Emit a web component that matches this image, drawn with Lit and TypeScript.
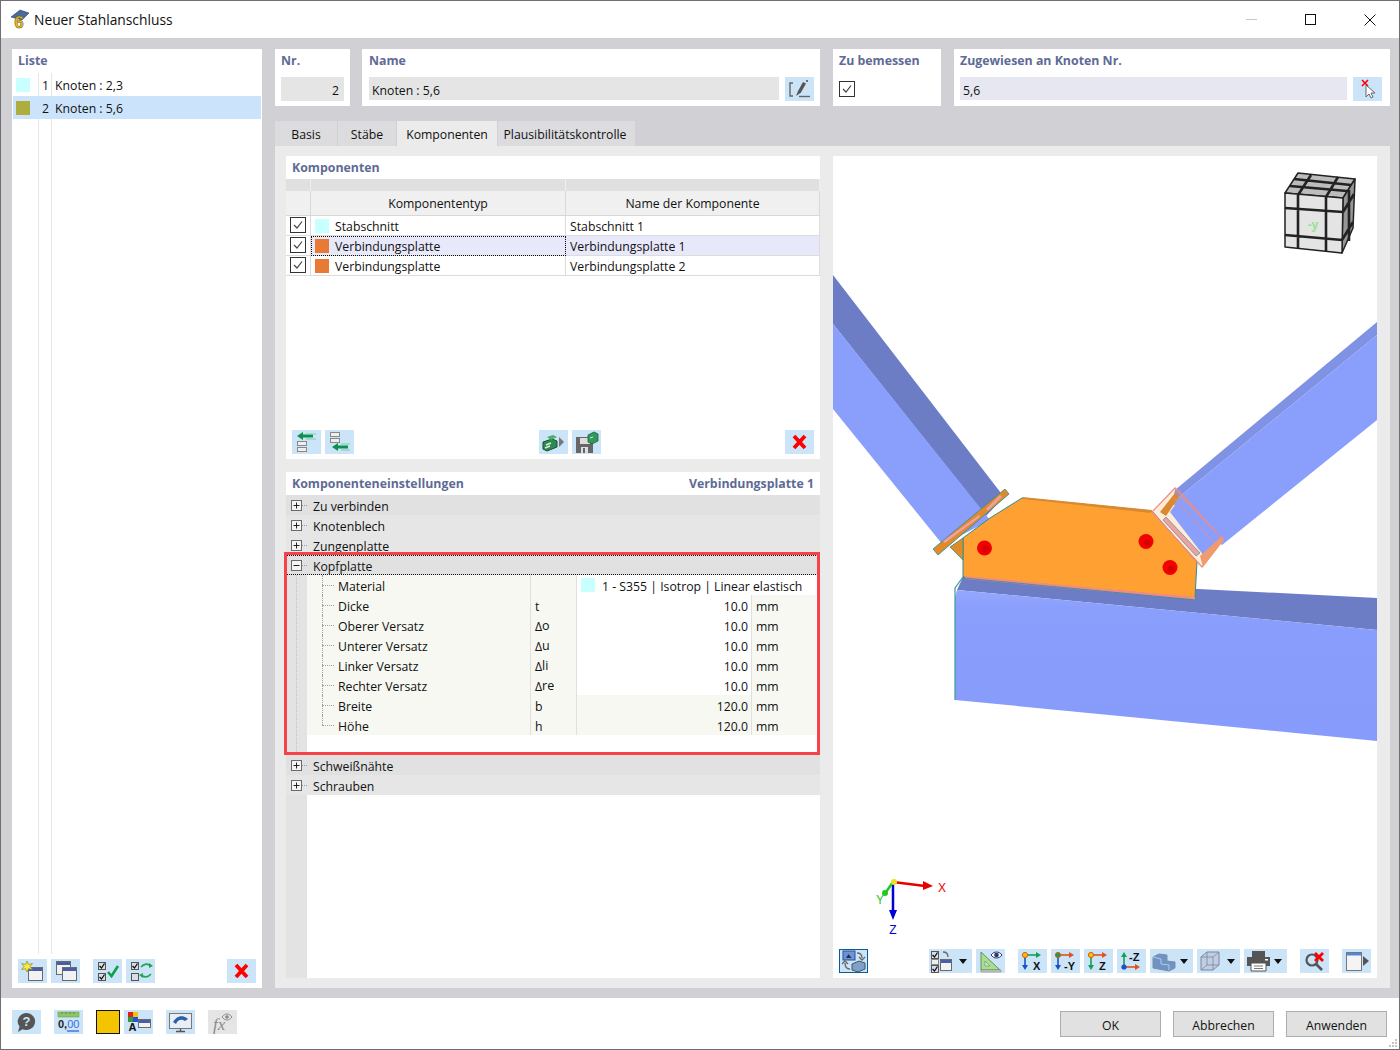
import { LitElement, css, html, svg } from 'lit'
import { customElement } from 'lit/decorators.js'

const icon = (body: any, w = 29): any => html`<svg width=${w} height="24" viewBox="0 0 ${w} 24">${body}</svg>`

// small building blocks for the toolbar icons
const win = (x: number, y: number, w: number, h: number): any => svg`
  <rect x=${x + 0.5} y=${y + 0.5} width=${w} height=${h} fill="#f2f2f2" stroke="#6a6a6a"/>
  <rect x=${x + 1} y=${y + 1} width=${w - 1} height="3" fill="#4a5da8"/>`

const box = (x: number, y: number, on = true): any => svg`
  <rect x=${x + 0.5} y=${y + 0.5} width="7" height="7" fill="#d8dde6" stroke="#555"/>
  ${on ? svg`<path d="M${x + 1.5} ${y + 4}l2 2 3-4.5" fill="none" stroke="#111" stroke-width="1.3"/>` : ''}`

const caret = (x: number): any => svg`<path d="M${x} 10h8l-4 5z" fill="#111"/>`

const redX = svg`<path d="M9 6l11 12M20 6L9 18" stroke="#f00" stroke-width="3.8" fill="none"/>`

const axis = (dot: string, right: string, down: string, label: string): any => svg`
  <path d="M7 6V18" stroke=${down} stroke-width="1.6"/><path d="M4 16h6l-3 5z" fill=${down}/>
  <path d="M7 6H19" stroke=${right} stroke-width="1.6"/><path d="M18 3v6l5-3z" fill=${right}/>
  <circle cx="7" cy="6" r="2.6" fill=${dot} stroke="#e05a10" stroke-width="1"/>
  <text x=${label.length > 1 ? 13 : 15} y="21" font-size="11" font-weight="700" font-family="Liberation Sans, sans-serif" fill="#111">${label}</text>`

const rows = (y: number): any => svg`
  <rect x="5.5" y=${y + 0.5} width="9" height="4" fill="#eee" stroke="#888"/>
  <rect x="5.5" y=${y + 6.5} width="9" height="4" fill="#eee" stroke="#888"/>`

const icons: Record<string, any> = {
  x: redX,
  edit: svg`<path d="M8 6H5V19H8" fill="none" stroke="#666" stroke-width="1.4"/><path d="M11 19l2-5 5-9 3 1.500-5 9z" fill="#555"/><path d="M14 19.500H25" stroke="#666" stroke-width="1.4"/><path d="M22 3v2" stroke="#555" stroke-width="1.6"/>`,
  pick: svg`<path d="M9 3l6 6M15 3L9 9" stroke="#f00" stroke-width="1.6"/><path d="M13 8v12l3-3 2 4 2-1-2-4h4z" fill="#fff" stroke="#666"/>`,
  addTop: svg`<path d="M5 6l6-4v2.500h10V7.500H11V10z" fill="#0d8f4f"/><path d="M14 4h10M14 9h10" stroke="#7ccfa8" stroke-width="1.200" fill="none"/>${rows(11)}`,
  addBot: svg`${rows(2)}<path d="M7 17l6-4v2.500h10v3H13V21z" fill="#0d8f4f"/><path d="M16 14h9M16 20h9" stroke="#7ccfa8" stroke-width="1.200" fill="none"/>`,
  drawer: svg`<path d="M4 12l9-3 5 2v6l-10 4-4-2z" fill="#2f8a50" stroke="#1f4d35"/><path d="M8 7l6-2 4 2-6 3z" fill="#49b06e"/><path d="M7 15l5-2M6 18l5-2" stroke="#d6efe0" stroke-width="1.400"/><path d="M20 7l5 5-5 5z" fill="#777"/>`,
  save: svg`<path d="M4 7H21V23H4z" fill="#666"/><rect x="8" y="8" width="10" height="6" fill="#ddd"/><rect x="9" y="17" width="7" height="6" fill="#ddd"/><rect x="11" y="18" width="2" height="5" fill="#666"/><path d="M16 5l6-3 4 2v7l-6 3-4-2z" fill="#2f9a5d" stroke="#1f5d3d" stroke-width=".8"/><path d="M18 8l3-1" stroke="#d6efe0"/>`,
  newWin: svg`${win(10, 8, 14, 13)}<path d="M9 2l1.500 3.500 4-1-2.500 3 2.500 3-4-.8L9 13l-1.400-3.300-4 .8 2.400-3-2.400-3 4 1z" fill="#ffe93a" stroke="#8a8a30" stroke-width=".7"/>`,
  copyWin: svg`${win(5, 2, 14, 13)}${win(11, 8, 14, 13)}`,
  checkAll: svg`${box(5, 3)}${box(5, 14)}<path d="M15 13l3.500 4L25 7" fill="none" stroke="#0fa04a" stroke-width="2.600"/>`,
  checkSwap: svg`${box(5, 3)}${box(5, 14, false)}<path d="M15 8c3-3.500 7-3.500 10-1M25 15c-3 3.500-7 3.500-10 1" fill="none" stroke="#22a552" stroke-width="1.800"/><path d="M23 4l4 3-4 2zM17 14l-4 2 4 3z" fill="#22a552"/>`,
  help: svg`<path d="M14 3a9 8.500 0 1 1-3.500 16.300L6 22l1.500-5.500A9 8.500 0 0 1 14 3z" fill="#555"/><text x="14.500" y="16" text-anchor="middle" font-size="13" font-weight="700" font-family="Liberation Sans, sans-serif" fill="#cbe4f8">?</text>`,
  digits: svg`<rect x="4" y="2" width="21" height="5" fill="#8fc46b" stroke="#6da04d" stroke-width=".6"/><path d="M8 2v2M12 2v2M16 2v2M20 2v2" stroke="#4f7d36" stroke-width=".8"/><text x="4" y="18" font-size="11" font-family="Liberation Sans, sans-serif" fill="#3a6fd8"><tspan font-weight="700" fill="#222">0,</tspan><tspan>00</tspan></text><path d="M13 21H25" stroke="#3a6fd8" stroke-width="1.400"/>`,
  palette: svg`<rect x="4" y="2" width="5" height="5" fill="#e02020"/><rect x="9" y="2" width="5" height="5" fill="#f5c400"/><rect x="4" y="7" width="5" height="5" fill="#2f9a3d"/><rect x="9" y="7" width="5" height="5" fill="#2a50d8"/><text x="4.500" y="21" font-size="11" font-weight="700" font-family="Liberation Sans, sans-serif" fill="#111">A</text>${win(14, 9, 12, 8)}`,
  monitor: svg`<rect x="3.500" y="3.500" width="22" height="15" fill="#e8eef5" stroke="#777"/><path d="M7 12c3-6 10-8 15-3l-3 2c-3-2-7-2-9 3z" fill="#2d5fa8"/><path d="M14.500 18.500V21M10 21.500h9" stroke="#555" stroke-width="1.400"/>`,
  fx: svg`<text x="5" y="20" font-size="17" font-style="italic" font-family="Liberation Serif, serif" fill="#8a8a8a">fx</text><path d="M14 7c3-4 7-4 10 0-3 4-7 4-10 0z" fill="none" stroke="#8a8a8a"/><circle cx="19" cy="7" r="1.800" fill="#8a8a8a"/>`,
  sync: svg`<rect x="4" y="2" width="12" height="9" fill="#6f93d8" stroke="#2a4f9a"/><path d="M7 9l2.500-4 3 4z" fill="#234"/><path d="M18 4c4 0 5 2 5 5M20 8l3 3 3-3" fill="none" stroke="#666" stroke-width="1.300"/><path d="M11 20c-4 0-5-2-5-6M3 15l3-3 3 3" fill="none" stroke="#666" stroke-width="1.300"/><path d="M13 15l7-3 6 2v6l-7 3-6-2z" fill="#7fa0c8" stroke="#456"/>`,
  views: svg`${box(2, 2)}<rect x="2.500" y="10.500" width="7" height="5" fill="#eee" stroke="#888"/>${box(2, 16)}${win(11, 10, 11, 11)}<path d="M14 3c4 0 5 2 5 5" fill="none" stroke="#666" stroke-width="1.300"/>${caret(30)}`,
  ruler: svg`<path d="M5 3V21H24z" fill="#a8e08a" stroke="#6a8a6a"/><path d="M9 12v5h5z" fill="#cbe4f8" stroke="#6a8a6a" stroke-width=".6"/><path d="M5 21h20v2H5z" fill="#c8d0c8" stroke="#777" stroke-width=".5"/><path d="M15 6c3-4 8-4 11 0-3 4-8 4-11 0z" fill="#fff" stroke="#2a3a6a"/><circle cx="20.500" cy="6" r="2.300" fill="#2a3a6a"/>`,
  axX: axis('#f5c400', '#15a050', '#1a50c8', 'X'),
  axY: axis('#15a050', '#e0521a', '#1a50c8', '-Y'),
  axZ: axis('#f5c400', '#e0521a', '#15a050', 'Z'),
  axMinusZ: svg`<path d="M7 18V6" stroke="#15a050" stroke-width="1.600"/><path d="M4 8h6L7 3z" fill="#15a050"/><path d="M7 18H19" stroke="#e0521a" stroke-width="1.600"/><path d="M18 15v6l5-3z" fill="#e0521a"/><circle cx="7" cy="18" r="2.600" fill="#1a50c8"/><text x="12" y="12" font-size="11" font-weight="700" font-family="Liberation Sans, sans-serif" fill="#111">-Z</text>`,
  solid: svg`<path d="M3 8l6-3 8 1v6l8 1v6l-6 3-16-3z" fill="#6e93c4" stroke="#7c8fa8"/><path d="M3 8l8 2v5l8 1v5" fill="none" stroke="#b8cbe4"/>${caret(30)}`,
  wire: svg`<path d="M4 8l6-5h12v13l-6 5H4z" fill="#b8c0d4" fill-opacity=".6" stroke="#7d86a0"/><path d="M4 8h12v13M16 8l6-5M10 3v13H22M10 16l-6 5" fill="none" stroke="#7d86a0" stroke-width=".8"/>${caret(30)}`,
  printer: svg`<path d="M8 2h13v6H8z" fill="#555"/><path d="M3 8h23v9H3z" fill="#555"/><path d="M7 14h15v8H7z" fill="#fff" stroke="#555"/><path d="M10 17h9M10 19.500h9" stroke="#777"/><rect x="21" y="10" width="3" height="1.500" fill="#fff"/>${caret(30)}`,
  zoomX: svg`<circle cx="12" cy="11" r="5.500" fill="none" stroke="#555" stroke-width="2.200"/><path d="M16 15l6 6" stroke="#555" stroke-width="2.600"/><path d="M15 4l8 8M23 4l-8 8" stroke="#f00" stroke-width="2.800"/>`,
  panel: svg`<rect x="4.500" y="3.500" width="15" height="18" fill="#f4f4f4" stroke="#777"/><rect x="5" y="4" width="14" height="2.500" fill="#4f86e0"/><path d="M21 7l6 5-6 5z" fill="#555"/>`
}

@customElement('app-root')
export class AppRoot extends LitElement {
  static styles = css`
    :host {
      display: block;
      width: 1400px;
      height: 1050px;
      font-family: "Open Sans", sans-serif;
      font-size: 12.25px;
      color: #111;
    }

    svg { display: block; }

    .window {
      box-sizing: border-box;
      width: 1400px;
      height: 1050px;
      border: 1px solid #6f6f6f;
      display: flex;
      flex-direction: column;
      background: #fff;
    }

    .title {
      height: 37px;
      flex: none;
      display: flex;
      align-items: center;
      padding-left: 8px;
      font-size: 13.8px;
      gap: 4px;
    }

    .win-controls {
      margin-left: auto;
      display: flex;
    }

    .win-controls div {
      width: 59px;
      height: 37px;
      display: flex;
      align-items: center;
      justify-content: center;
    }

    .main {
      flex: 1;
      min-height: 0;
      display: flex;
      gap: 13px;
      padding: 11px 9px 10px 11px;
      background: #d0d0d5;
    }

    .list {
      width: 250px;
      flex: none;
      background: #fff;
      display: flex;
      flex-direction: column;
    }

    .head {
      font-weight: 700;
      color: #5e6b96;
      font-size: 12.35px;
      line-height: 16px;
    }

    .list .head { padding: 4px 6px 4px; }

    .list-body {
      flex: 1;
      position: relative;
      background:
        linear-gradient(#e6e6e6, #e6e6e6) 26px 0 / 1px 100% no-repeat,
        linear-gradient(#e6e6e6, #e6e6e6) 39px 0 / 1px 100% no-repeat;
      margin-bottom: 5px;
      display: flex;
      flex-direction: column;
    }

    .list-row {
      height: 23px;
      display: flex;
      align-items: center;
      margin: 0 1px;
    }

    .list-row.sel { background: #cce4fb; }

    .list-row i {
      width: 14px;
      height: 14px;
      margin-left: 3px;
    }

    .list-row b {
      font-weight: 400;
      width: 19px;
      text-align: right;
      padding-top: 2px;
    }

    .list-row span {
      margin-left: 6px;
      padding-top: 2px;
    }

    .c-cyan { background: #c8ffff; }
    .c-olive { background: #adae3f; }
    .c-orange { background: #e97a35; }

    .tools {
      display: flex;
      gap: 4px;
      flex: none;
    }

    .list .tools { padding: 0 6px 5px; }

    .ib {
      width: 29px;
      height: 24px;
      flex: none;
      background: #cbe4f8;
    }

    .ib.dd { width: 43px; }

    .ib.off { background: #e5e5e5; }

    .ib.on {
      box-sizing: border-box;
      border: 1px solid #0a5a9c;
    }

    .ib.on svg { margin: -1px; }

    .push { margin-left: auto; }

    .right {
      flex: 1;
      min-width: 0;
      display: flex;
      flex-direction: column;
    }

    .top {
      height: 57px;
      flex: none;
      display: flex;
      margin-bottom: 15px;
    }

    .card {
      box-sizing: border-box;
      background: #fff;
      padding: 4px 6px 0;
    }

    .card.nr { width: 75px; margin-right: 12px; }
    .card.name { width: 458px; margin-right: 13px; padding-left: 7px; }
    .card.check { width: 108px; margin-right: 13px; }
    .card.assign { width: 436px; padding-right: 8px; }

    .field-row {
      display: flex;
      gap: 6px;
      margin-top: 8px;
    }

    .field {
      flex: 1;
      height: 23px;
      line-height: 27px;
      background: #e5e5e5;
      padding: 0 3px;
      white-space: nowrap;
    }

    .nr .field { text-align: right; padding-right: 5px; line-height: 27px; height: 24px; }
    .assign .field { background: #e6e7f1; }

    .check-field { margin: 12px 0 0; }

    .cb {
      box-sizing: border-box;
      width: 16px;
      height: 16px;
      border: 1px solid #333;
      background: #fff;
      flex: none;
    }

    .cb svg { width: 14px; height: 14px; }

    .tabs {
      display: flex;
      height: 25px;
      flex: none;
      gap: 1px;
    }

    .tab {
      background: #dcdcdf;
      display: flex;
      align-items: center;
      justify-content: center;
      padding-top: 1px;
      box-sizing: border-box;
    }

    .tab.active { background: #ebebeb; }
    .tab.basis { width: 62px; }
    .tab.staebe { width: 58px; }
    .tab.komp { width: 100px; }
    .tab.plaus { width: 137px; padding-right: 3px; }

    .tab-panel {
      flex: 1;
      min-height: 0;
      background: #ebebeb;
      padding: 10px 13px 10px 11px;
      display: grid;
      grid-template-columns: 534px 544px;
      gap: 13px;
    }

    .left {
      display: flex;
      flex-direction: column;
      gap: 13px;
      min-height: 0;
    }

    .panel {
      background: #fff;
      display: flex;
      flex-direction: column;
    }

    .panel.comp { height: 303px; }

    .panel.settings {
      flex: 1;
      min-height: 0;
      position: relative;
    }

    .panel-head {
      display: flex;
      justify-content: space-between;
      padding: 4px 6px 3px;
    }

    .table {
      display: grid;
      grid-template-columns: 25px 255px 254px;
      grid-auto-rows: 20px;
    }

    .band {
      height: 12px;
      background: #e0e0e0;
      display: grid;
      grid-template-columns: 25px 255px 254px;
    }

    .band div { border-right: 1px solid #efefef; }

    .table.header { grid-auto-rows: 25px; }

    .table.header div {
      background: #f0f0f0;
      border-right: 1px solid #d8d8d8;
      border-bottom: 1px solid #d8d8d8;
      display: flex;
      align-items: center;
      justify-content: center;
      box-sizing: border-box;
    }

    .cell {
      box-sizing: border-box;
      border-right: 1px solid #dcdcdc;
      border-bottom: 1px solid #dcdcdc;
      display: flex;
      align-items: center;
      padding: 1px 0 0 4px;
      white-space: nowrap;
    }

    .cell.chk {
      padding: 1px 0 0 4px;
      align-items: flex-start;
    }

    .cell.hl { background: #e8e8fb; }

    .cell.focus {
      outline: 1px dotted #111;
      outline-offset: -1px;
    }

    .cell i {
      width: 14px;
      height: 14px;
      margin-right: 6px;
      margin-top: -1px;
    }

    .comp .tools {
      margin-top: auto;
      padding: 0 6px 5px;
    }

    .gap-185 { margin-left: 177px; }

    .section {
      height: 20px;
      flex: none;
      display: flex;
      align-items: center;
      padding: 2px 0 0 5px;
      background: #e6e6e6;
      box-sizing: border-box;
    }

    .section.dark { background: #e1e1e1; }

    .section.focus {
      outline: 1px dotted #111;
      outline-offset: -1px;
    }

    .section svg {
      margin-right: 5px;
      margin-top: -2px;
    }

    .sub {
      display: flex;
      height: 180px;
      flex: none;
    }

    .gutter {
      width: 21px;
      flex: none;
      background: #e3e3e3 repeating-linear-gradient(#c2c2c2 0 1px, transparent 1px 2px) 10px 0 / 1px 100% no-repeat;
    }

    .grid {
      flex: 1;
      display: grid;
      grid-template-columns: 224px 46px 175px 64px;
      grid-auto-rows: 20px;
    }

    .grid > div {
      box-sizing: border-box;
      background: #f7f8f2;
      display: flex;
      align-items: center;
      white-space: nowrap;
      padding-top: 2px;
    }

    .grid > .g-name {
      position: relative;
      padding-left: 31px;
      border-right: 1px solid #e0e0e0;
    }

    .g-name::before {
      content: '';
      position: absolute;
      left: 15px;
      top: 10px;
      width: 12px;
      border-top: 1px dotted #a0a0a0;
    }

    .g-name::after {
      content: '';
      position: absolute;
      left: 15px;
      top: 0;
      height: 20px;
      border-left: 1px dotted #a0a0a0;
    }

    .g-name.last::after { height: 10px; }

    .grid > .g-sym {
      padding-left: 4px;
      border-right: 1px solid #e0e0e0;
    }

    .g-sym sub {
      font-size: 12.5px;
      vertical-align: -4px;
      line-height: 0;
    }

    .grid > .g-val {
      justify-content: flex-end;
      padding-right: 3px;
      border-right: 1px solid #e0e0e0;
    }

    .grid > .g-val.edit { background: #fff; }

    .grid > .g-unit { padding-left: 4px; }

    .grid > .g-mat {
      grid-column: 3 / 5;
      background: #fff;
      padding-left: 4px;
    }

    .g-mat i {
      width: 14px;
      height: 14px;
      margin-right: 7px;
      margin-top: -2px;
    }

    .filler {
      flex: 1;
      border-left: 21px solid #e3e3e3;
    }

    .red-frame {
      position: absolute;
      left: -2px;
      top: 80px;
      width: 536px;
      height: 203px;
      box-sizing: border-box;
      border: 3px solid #f4444a;
      pointer-events: none;
    }

    .view {
      position: relative;
      background: #fff;
      overflow: hidden;
      display: flex;
      flex-direction: column;
    }

    .scene {
      position: absolute;
      left: 0;
      top: 0;
    }

    .view .tools {
      position: relative;
      margin-top: auto;
      padding: 0 6px 5px;
    }

    .gap-61 { margin-left: 53px; }
    .gap-13 { margin-left: 5px; }

    .footer {
      height: 51px;
      flex: none;
      display: flex;
      align-items: flex-start;
      position: relative;
      padding: 12px 12px 0 11px;
      box-sizing: border-box;
    }

    .swatch {
      box-sizing: border-box;
      width: 24px;
      height: 24px;
      background: #f5c400;
      border: 1px solid #111;
    }

    .buttons {
      margin-left: auto;
      display: flex;
      gap: 12px;
      padding-top: 1px;
    }

    .btn {
      box-sizing: border-box;
      width: 101px;
      height: 26px;
      background: #e1e1e1;
      border: 1px solid #adadad;
      display: flex;
      align-items: center;
      justify-content: center;
      padding-top: 2px;
    }

    .grip {
      position: absolute;
      right: 1px;
      bottom: 1px;
    }
  `

  btn (name: string, cls = ''): any {
    return html`<div class="ib ${cls}">${icon(icons[name], cls.includes('dd') ? 43 : 29)}</div>`
  }

  expander (open: boolean): any {
    return html`<svg width="17" height="11" viewBox="0 0 17 11">
      <rect x=".5" y=".5" width="10" height="10" fill="#f4f4f4" stroke="#6a6a6a"/>
      <path d="M2.500 5.500h6" stroke="#222"/>
      ${open ? '' : svg`<path d="M5.500 2.500v6" stroke="#222"/>`}
      <path d="M11 5.500h6" stroke="#999" stroke-dasharray="1 1"/>
    </svg>`
  }

  section (label: string, cls = ''): any {
    return html`<div class="section ${cls}">${this.expander(cls.includes('focus'))}${label}</div>`
  }

  checkbox (): any {
    return html`<div class="cb"><svg viewBox="0 0 14 14"><path d="M3 7l3 3 5-6.500" fill="none" stroke="#444" stroke-width="1.200"/></svg></div>`
  }

  scene (): any {
    return html`<svg class="scene" width="544" height="822" viewBox="833 156 544 822">
      <defs>
        <linearGradient id="lower" x1="0" y1="0" x2="0" y2="1">
          <stop offset="0" stop-color="#95a8ff"/><stop offset=".12" stop-color="#8a9efc"/><stop offset="1" stop-color="#869bfb"/>
        </linearGradient>
      </defs>
      <!-- left diagonal member -->
      <polygon points="833,275 1004,497 986,516 833,324" fill="#6c7dc6"/>
      <polygon points="833,324 990,520 943,545 833,409" fill="#8a9efc"/>
      <!-- right diagonal member -->
      <polygon points="1377,322 1175,490 1172,503 1377,335" fill="#7f92e4"/>
      <polygon points="1377,335 1172,503 1222,545 1377,420" fill="#8a9efc"/>
      <!-- chord -->
      <polygon points="963,577 1377,598 1377,630 957,590" fill="#6c7dc6"/>
      <polygon points="957,590 1377,630 1377,741 955,700 955,597" fill="url(#lower)"/>
      <path d="M963 577L955 588V700" fill="none" stroke="#3a9a9a" stroke-width="1.200"/>
      <!-- gusset plate -->
      <polygon points="963,538 990,518 1022,498 1152,511 1197,562 1195,598 963,577" fill="#ffa033" stroke="#2a8f8f" stroke-width="1"/>
      <polygon points="1022,497 1152,510 1150,513 1024,499" fill="#d98a30"/>
      <polygon points="965,576 1195,597 1195,600 965,579" fill="#f08a8a"/>
      <path d="M963 578L1196 600" stroke="#2a8f8f" stroke-width=".8"/>
      <!-- left end plate -->
      <polygon points="963,538 950,547 963,560" fill="#e08a2a" stroke="#2a8f8f" stroke-width=".8"/>
      <polygon points="933,549 1005,489 1009,494 938,555" fill="#e08a2a" stroke="#2a8f8f" stroke-width=".8"/>
      <polygon points="943,541 979,515 980,517 945,543" fill="#f0a0a0"/>
      <polygon points="986,509 1000,495 1002,497 988,511" fill="#f0a0a0"/>
      <!-- right end plate -->
      <polygon points="1152,512 1175,488 1223,540 1202,567" fill="#ffa033" fill-opacity=".2" stroke="#f08a8a" stroke-width="1.200"/>
      <polygon points="1160,512 1175,493 1179,497 1166,516" fill="#d98a30"/>
      <polygon points="1170,512 1180,498 1223,540 1204,556" fill="#8a9efc"/>
      <polygon points="1200,556 1222,536 1224,540 1203,567" fill="#f09a70"/>
      <path d="M1178 489L1223 540M1172 496L1217 546" stroke="#f08a8a" fill="none" stroke-width=".8"/>
      <polygon points="1166,517 1200,553 1196,556 1163,520" fill="#f0a0a0" stroke="#2a8f8f" stroke-width=".6"/>
      <!-- bolts -->
      <circle cx="984.500" cy="548" r="7.500" fill="#f40000"/>
      <circle cx="1146" cy="541.500" r="7.500" fill="#f40000"/>
      <circle cx="1170" cy="567.500" r="7.500" fill="#f40000"/>
      <circle cx="986" cy="549" r="3.500" fill="#d80000"/>
      <circle cx="1147" cy="542.500" r="3.500" fill="#d80000"/>
      <circle cx="1171" cy="568.500" r="3.500" fill="#d80000"/>
      <!-- view cube -->
      <polygon points="1285,193 1298,173 1355,179 1343,198" fill="#bcbcbc" stroke="#222" stroke-width="1.500" stroke-linejoin="round"/>
      <polygon points="1343,198 1355,179 1353,228 1342,253" fill="#969696" stroke="#222" stroke-width="1.500" stroke-linejoin="round"/>
      <polygon points="1285,193 1343,198 1342,253 1285,247" fill="#e4e4e4" stroke="#222" stroke-width="1.500" stroke-linejoin="round"/>
      <g stroke="#222" stroke-width="2.600" fill="none">
        <path d="M1298 195V249M1326 197V252M1285 208L1343 212M1285 235L1342 240"/>
        <path d="M1298 195L1311 175M1326 197L1338 177M1290 186L1347 191M1294 179L1351 185"/>
        <path d="M1343 212L1354 194M1342 240L1353 222M1349 190V241"/>
      </g>
      <text x="1313" y="229" text-anchor="middle" font-size="12" font-weight="700" font-family="Open Sans, sans-serif" fill="#9be09b">-y</text>
      <!-- axes -->
      <path d="M893 882L925 886" stroke="#e80000" stroke-width="2.500"/><path d="M923 881l10 5-10 4z" fill="#e80000"/>
      <path d="M893 882V912" stroke="#0000d8" stroke-width="2.500"/><path d="M889 910h8l-4 10z" fill="#0000d8"/>
      <path d="M893 882L886 892" stroke="#20c820" stroke-width="2.500"/><circle cx="885" cy="893" r="3" fill="#20c820"/>
      <circle cx="894" cy="882" r="3" fill="#e8e020"/>
      <text x="942" y="892" text-anchor="middle" font-size="12" font-family="Liberation Sans, sans-serif" fill="#e80000">X</text>
      <text x="880" y="904" text-anchor="middle" font-size="12" font-family="Liberation Sans, sans-serif" fill="#20c820">Y</text>
      <text x="893" y="934" text-anchor="middle" font-size="12" font-family="Liberation Sans, sans-serif" fill="#0000d8">Z</text>
    </svg>`
  }

  render (): any {
    const params = [
      ['Dicke', html`t`, '10.0', true],
      ['Oberer Versatz', html`Δ<sub>o</sub>`, '10.0', true],
      ['Unterer Versatz', html`Δ<sub>u</sub>`, '10.0', true],
      ['Linker Versatz', html`Δ<sub>li</sub>`, '10.0', true],
      ['Rechter Versatz', html`Δ<sub>re</sub>`, '10.0', true],
      ['Breite', html`b`, '120.0', false],
      ['Höhe', html`h`, '120.0', false]
    ]
    return html`
      <div class="window">
        <div class="title">
          <svg width="21" height="24" viewBox="0 0 21 24">
            <path d="M2 9l9-7 9 3-7 7z" fill="#4a6a9a" stroke="#2d3f5f" stroke-width=".6"/>
            <text x="10" y="20" text-anchor="middle" font-size="17" font-weight="700" font-family="Liberation Sans, sans-serif" fill="#e8b820" stroke="#6a5a20" stroke-width=".5">6</text>
          </svg>
          <span>Neuer Stahlanschluss</span>
          <div class="win-controls">
            <div><svg width="11" height="11"><path d="M0 5.500h11" stroke="#c8c8c8"/></svg></div>
            <div><svg width="11" height="11"><rect x=".5" y=".5" width="10" height="10" fill="none" stroke="#111"/></svg></div>
            <div><svg width="12" height="12"><path d="M.5 .5l11 11M11.500 .5l-11 11" stroke="#111"/></svg></div>
          </div>
        </div>

        <div class="main">
          <div class="list">
            <div class="head">Liste</div>
            <div class="list-body">
              <div class="list-row"><i class="c-cyan"></i><b>1</b><span>Knoten : 2,3</span></div>
              <div class="list-row sel"><i class="c-olive"></i><b>2</b><span>Knoten : 5,6</span></div>
            </div>
            <div class="tools">
              ${this.btn('newWin')}${this.btn('copyWin')}
              <span class="gap-13"></span>
              ${this.btn('checkAll')}${this.btn('checkSwap')}
              <span class="push"></span>
              ${this.btn('x')}
            </div>
          </div>

          <div class="right">
            <div class="top">
              <div class="card nr">
                <div class="head">Nr.</div>
                <div class="field-row"><div class="field">2</div></div>
              </div>
              <div class="card name">
                <div class="head">Name</div>
                <div class="field-row"><div class="field">Knoten : 5,6</div>${this.btn('edit')}</div>
              </div>
              <div class="card check">
                <div class="head">Zu bemessen</div>
                <div class="check-field">${this.checkbox()}</div>
              </div>
              <div class="card assign">
                <div class="head">Zugewiesen an Knoten Nr.</div>
                <div class="field-row"><div class="field">5,6</div>${this.btn('pick')}</div>
              </div>
            </div>

            <div class="tabs">
              <div class="tab basis">Basis</div>
              <div class="tab staebe">Stäbe</div>
              <div class="tab komp active">Komponenten</div>
              <div class="tab plaus">Plausibilitätskontrolle</div>
            </div>

            <div class="tab-panel">
              <div class="left">
                <div class="panel comp">
                  <div class="panel-head head">Komponenten</div>
                  <div class="band"><div></div><div></div><div></div></div>
                  <div class="table header"><div></div><div>Komponententyp</div><div>Name der Komponente</div></div>
                  <div class="table">
                    <div class="cell chk">${this.checkbox()}</div>
                    <div class="cell"><i class="c-cyan"></i>Stabschnitt</div>
                    <div class="cell">Stabschnitt 1</div>
                    <div class="cell chk">${this.checkbox()}</div>
                    <div class="cell hl focus"><i class="c-orange"></i>Verbindungsplatte</div>
                    <div class="cell hl">Verbindungsplatte 1</div>
                    <div class="cell chk">${this.checkbox()}</div>
                    <div class="cell"><i class="c-orange"></i>Verbindungsplatte</div>
                    <div class="cell">Verbindungsplatte 2</div>
                  </div>
                  <div class="tools">
                    ${this.btn('addTop')}${this.btn('addBot')}
                    <span class="gap-185"></span>
                    ${this.btn('drawer')}${this.btn('save')}
                    <span class="push"></span>
                    ${this.btn('x')}
                  </div>
                </div>

                <div class="panel settings">
                  <div class="panel-head head"><span>Komponenteneinstellungen</span><span>Verbindungsplatte 1</span></div>
                  ${this.section('Zu verbinden', 'dark')}
                  ${this.section('Knotenblech')}
                  ${this.section('Zungenplatte')}
                  ${this.section('Kopfplatte', 'dark focus')}
                  <div class="sub">
                    <div class="gutter"></div>
                    <div class="grid">
                      <div class="g-name">Material</div>
                      <div class="g-sym"></div>
                      <div class="g-mat"><i class="c-cyan"></i>1 - S355 | Isotrop | Linear elastisch</div>
                      ${params.map((p, i) => html`
                        <div class="g-name ${i === params.length - 1 ? 'last' : ''}">${p[0]}</div>
                        <div class="g-sym">${p[1]}</div>
                        <div class="g-val ${p[3] === true ? 'edit' : ''}">${p[2]}</div>
                        <div class="g-unit">mm</div>
                      `)}
                    </div>
                  </div>
                  ${this.section('Schweißnähte', 'dark')}
                  ${this.section('Schrauben')}
                  <div class="filler"></div>
                  <div class="red-frame"></div>
                </div>
              </div>

              <div class="view">
                ${this.scene()}
                <div class="tools">
                  ${this.btn('sync', 'on')}
                  <span class="gap-61"></span>
                  ${this.btn('views', 'dd')}${this.btn('ruler')}
                  <span class="gap-13"></span>
                  ${this.btn('axX')}${this.btn('axY')}${this.btn('axZ')}${this.btn('axMinusZ')}
                  ${this.btn('solid', 'dd')}${this.btn('wire', 'dd')}${this.btn('printer', 'dd')}
                  <span class="gap-13"></span>
                  ${this.btn('zoomX')}
                  <span class="gap-13"></span>
                  ${this.btn('panel')}
                </div>
              </div>
            </div>
          </div>
        </div>

        <div class="footer">
          <div class="tools">
            ${this.btn('help')}
            <span class="gap-13"></span>
            ${this.btn('digits')}
            <span class="gap-13"></span>
            <div class="swatch"></div>
            ${this.btn('palette')}
            <span class="gap-13"></span>
            ${this.btn('monitor')}
            <span class="gap-13"></span>
            ${this.btn('fx', 'off')}
          </div>
          <div class="buttons">
            <div class="btn">OK</div>
            <div class="btn">Abbrechen</div>
            <div class="btn">Anwenden</div>
          </div>
          <svg class="grip" width="10" height="10" viewBox="0 0 10 10" fill="#c4c4c4">
            <rect x="7" y="1" width="2" height="2"/><rect x="4" y="4" width="2" height="2"/><rect x="7" y="4" width="2" height="2"/>
            <rect x="1" y="7" width="2" height="2"/><rect x="4" y="7" width="2" height="2"/><rect x="7" y="7" width="2" height="2"/>
          </svg>
        </div>
      </div>
    `
  }
}
